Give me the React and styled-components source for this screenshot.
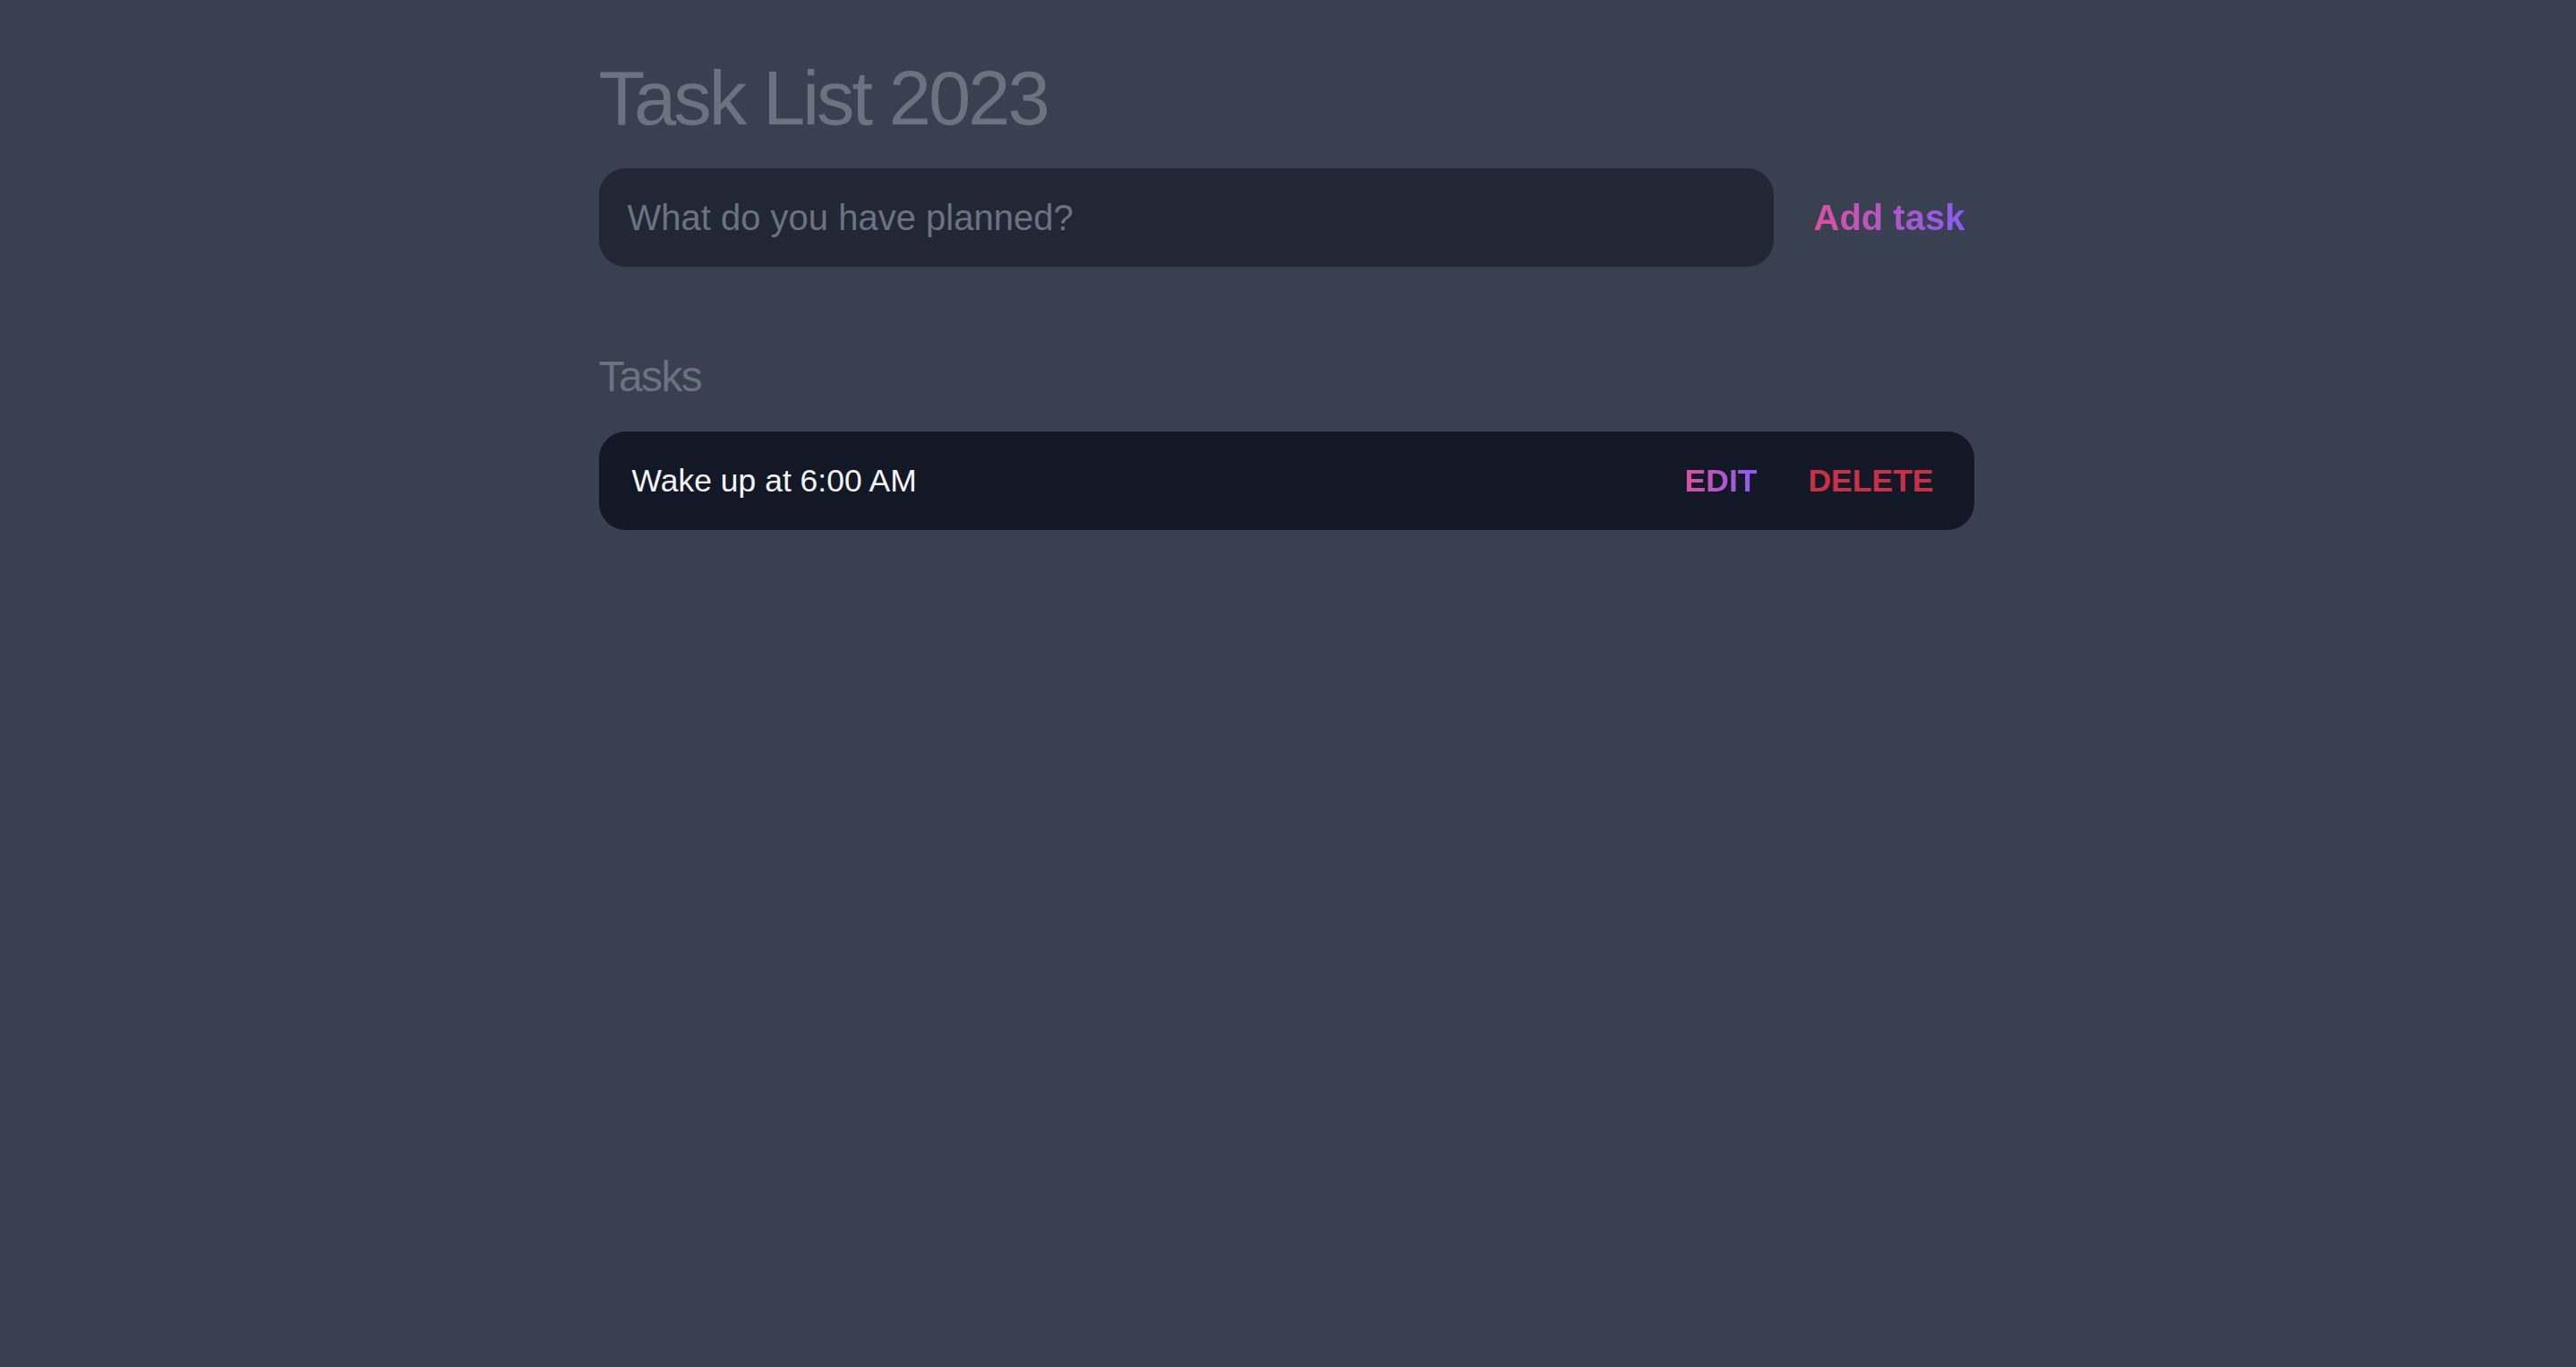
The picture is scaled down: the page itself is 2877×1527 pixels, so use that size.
import styled, { createGlobalStyle } from 'styled-components'

const GlobalStyle = createGlobalStyle`
  html, body {
    margin: 0;
    padding: 0;
    background-color: #394050;
    min-height: 100%;
  }
  body {
    font-family: "Liberation Sans", Arial, Helvetica, sans-serif;
    min-height: 1527px;
    padding-right: 4px;
  }
`

const gradientText = `
  background-image: linear-gradient(to right, #d9519d, #8b5cf6);
  -webkit-background-clip: text;
  background-clip: text;
  color: transparent;
`

const Page = styled.main`
  max-width: 1536px;
  margin: 0 auto;
  padding-top: 67px;
  display: flex;
  flex-direction: column;
`

const Title = styled.h1`
  margin: 0;
  font-size: 85px;
  line-height: 85px;
  font-weight: 300;
  letter-spacing: -3px;
  color: #6b7280;
`

const InputRow = styled.form`
  margin-top: 36px;
  display: flex;
  align-items: center;
  gap: 45px;
`

const TaskInput = styled.input`
  box-sizing: border-box;
  width: 1312px;
  height: 110px;
  border: none;
  outline: none;
  border-radius: 30px;
  background-color: #222735;
  padding: 0 32px;
  font-family: inherit;
  font-size: 40px;
  color: #e5e7eb;
  &::placeholder {
    color: #6b7280;
  }
`

const AddButton = styled.button`
  border: none;
  background: none;
  padding: 0;
  cursor: pointer;
  font-family: inherit;
  font-size: 40px;
  font-weight: 700;
  ${gradientText}
`

const SectionTitle = styled.h2`
  margin: 99px 0 0;
  font-size: 48px;
  line-height: 48px;
  font-weight: 300;
  letter-spacing: -1.6px;
  color: #6b7280;
`

const TaskList = styled.ul`
  list-style: none;
  margin: 37px 0 0;
  padding: 0;
  display: flex;
  flex-direction: column;
  gap: 24px;
`

const TaskRow = styled.li`
  box-sizing: border-box;
  height: 110px;
  border-radius: 30px;
  background-color: #131827;
  display: flex;
  align-items: center;
  justify-content: space-between;
  padding: 0 45px 0 37px;
`

const TaskText = styled.span`
  font-size: 35.5px;
  color: #f3f4f6;
`

const Actions = styled.div`
  display: flex;
  align-items: center;
  gap: 57px;
`

const ActionButton = styled.button`
  border: none;
  background: none;
  padding: 0;
  cursor: pointer;
  font-family: inherit;
  font-size: 35.5px;
  font-weight: 700;
  text-transform: uppercase;
  ${(props) => (props.danger ? 'color: #c92f45;' : gradientText)}
`

const tasks = [{ id: 1, text: 'Wake up at 6:00 AM' }]

export default function App() {
  return (
    <>
      <GlobalStyle />
      <Page>
        <Title>Task List 2023</Title>
        <InputRow onSubmit={(e) => e.preventDefault()}>
          <TaskInput type="text" placeholder="What do you have planned?" />
          <AddButton type="submit">Add task</AddButton>
        </InputRow>
        <SectionTitle>Tasks</SectionTitle>
        <TaskList>
          {tasks.map((task) => (
            <TaskRow key={task.id}>
              <TaskText>{task.text}</TaskText>
              <Actions>
                <ActionButton>Edit</ActionButton>
                <ActionButton danger>Delete</ActionButton>
              </Actions>
            </TaskRow>
          ))}
        </TaskList>
      </Page>
    </>
  )
}
